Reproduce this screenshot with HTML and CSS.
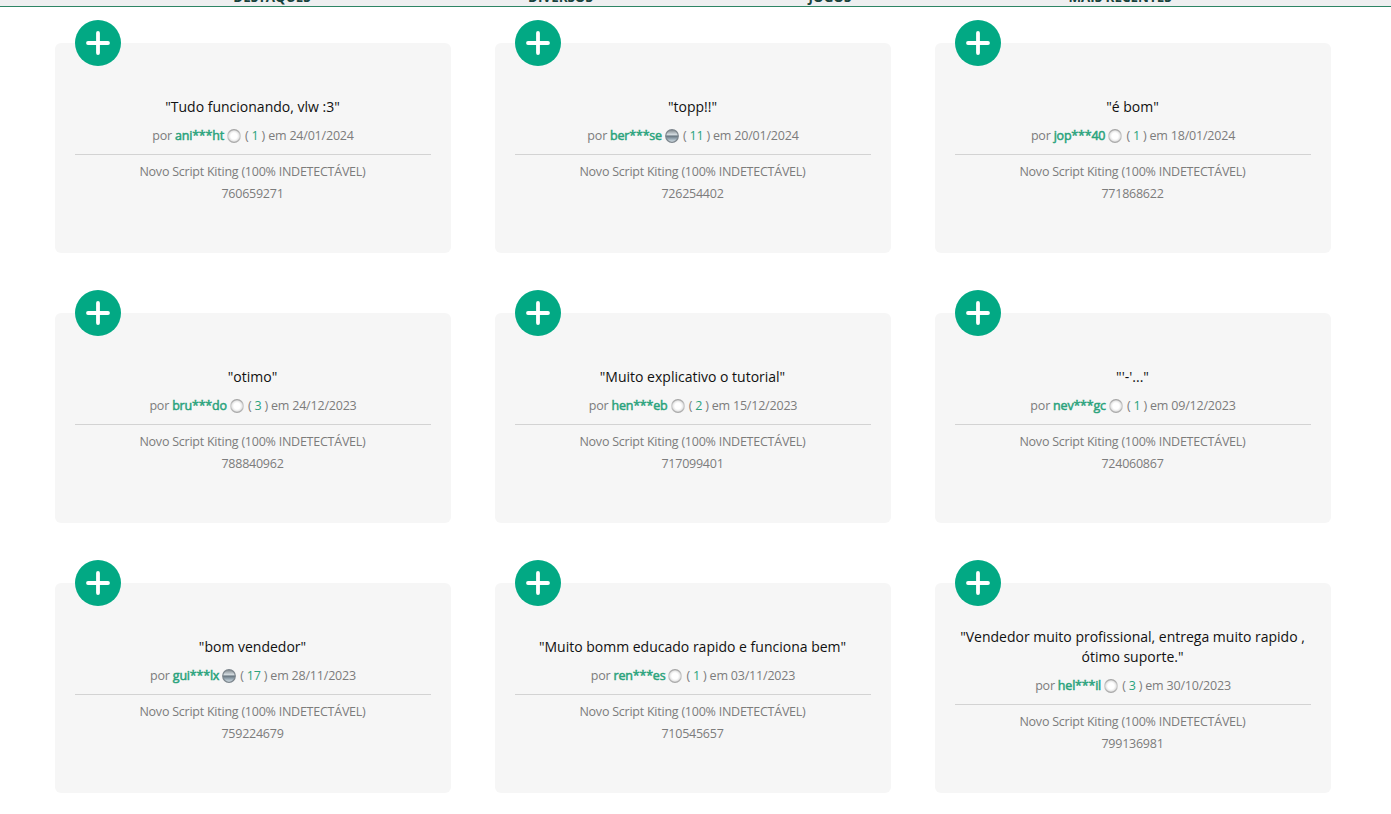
FILE: index.html
```
<!DOCTYPE html>
<html lang="pt-BR">
<head>
    <meta charset="UTF-8">
    <meta name="viewport" content="width=device-width, initial-scale=1.0">
    <title>Avaliações</title>
    <link rel="stylesheet" href="styles.css">
</head>
<body>
    <!-- Shared icons -->
    <svg class="sprite" width="0" height="0">
        <defs>
            <linearGradient id="silver" x1="0" y1="0" x2="0" y2="1">
                <stop offset="0" stop-color="#a4a4a4"/>
                <stop offset="0.5" stop-color="#cfcfcf"/>
                <stop offset="1" stop-color="#a8a8a8"/>
            </linearGradient>
            <radialGradient id="pearl">
                <stop offset="0.5" stop-color="#ffffff"/>
                <stop offset="1" stop-color="#d8d8d8"/>
            </radialGradient>
            <linearGradient id="steel" x1="0" y1="0" x2="0" y2="1">
                <stop offset="0" stop-color="#7d858b"/>
                <stop offset="0.38" stop-color="#d2dade"/>
                <stop offset="0.52" stop-color="#6b7983"/>
                <stop offset="0.7" stop-color="#93a3ae"/>
                <stop offset="1" stop-color="#dce8ee"/>
            </linearGradient>
        </defs>
        <symbol id="plus" viewBox="0 0 46 46">
            <circle cx="23" cy="23" r="23" fill="#02a984"/>
            <path d="M23 13v20M13 23h20" stroke="#fff" stroke-width="3.8" stroke-linecap="round"/>
        </symbol>
        <symbol id="ball-white" viewBox="0 0 14 14">
            <circle cx="7" cy="7" r="6.3" fill="url(#pearl)" stroke="url(#silver)" stroke-width="1.2"/>
        </symbol>
        <symbol id="ball-steel" viewBox="0 0 14 14">
            <circle cx="7" cy="7" r="6.3" fill="url(#steel)" stroke="#7d868d" stroke-width="1.2"/>
        </symbol>
    </svg>

    <nav class="menu">
        <a class="menu-item">DESTAQUES</a>
        <a class="menu-item">DIVERSOS</a>
        <a class="menu-item">JOGOS</a>
        <a class="menu-item">MAIS RECENTES</a>
    </nav>

    <main class="reviews">
        <div class="card">
            <svg class="plus"><use href="#plus"/></svg>
            <p class="quote">"Tudo funcionando, vlw :3"</p>
            <p class="author">por <b>ani***ht</b> <svg class="ball"><use href="#ball-white"/></svg> ( <span class="points">1</span> ) em 24/01/2024</p>
            <p class="product">Novo Script Kiting (100% INDETECTÁVEL)<br>760659271</p>
        </div>
        <div class="card">
            <svg class="plus"><use href="#plus"/></svg>
            <p class="quote">"topp!!"</p>
            <p class="author">por <b>ber***se</b> <svg class="ball"><use href="#ball-steel"/></svg> ( <span class="points">11</span> ) em 20/01/2024</p>
            <p class="product">Novo Script Kiting (100% INDETECTÁVEL)<br>726254402</p>
        </div>
        <div class="card">
            <svg class="plus"><use href="#plus"/></svg>
            <p class="quote">"é bom"</p>
            <p class="author">por <b>jop***40</b> <svg class="ball"><use href="#ball-white"/></svg> ( <span class="points">1</span> ) em 18/01/2024</p>
            <p class="product">Novo Script Kiting (100% INDETECTÁVEL)<br>771868622</p>
        </div>
        <div class="card">
            <svg class="plus"><use href="#plus"/></svg>
            <p class="quote">"otimo"</p>
            <p class="author">por <b>bru***do</b> <svg class="ball"><use href="#ball-white"/></svg> ( <span class="points">3</span> ) em 24/12/2023</p>
            <p class="product">Novo Script Kiting (100% INDETECTÁVEL)<br>788840962</p>
        </div>
        <div class="card">
            <svg class="plus"><use href="#plus"/></svg>
            <p class="quote">"Muito explicativo o tutorial"</p>
            <p class="author">por <b>hen***eb</b> <svg class="ball"><use href="#ball-white"/></svg> ( <span class="points">2</span> ) em 15/12/2023</p>
            <p class="product">Novo Script Kiting (100% INDETECTÁVEL)<br>717099401</p>
        </div>
        <div class="card">
            <svg class="plus"><use href="#plus"/></svg>
            <p class="quote">"'-'..."</p>
            <p class="author">por <b>nev***gc</b> <svg class="ball"><use href="#ball-white"/></svg> ( <span class="points">1</span> ) em 09/12/2023</p>
            <p class="product">Novo Script Kiting (100% INDETECTÁVEL)<br>724060867</p>
        </div>
        <div class="card">
            <svg class="plus"><use href="#plus"/></svg>
            <p class="quote">"bom vendedor"</p>
            <p class="author">por <b>gui***lx</b> <svg class="ball"><use href="#ball-steel"/></svg> ( <span class="points">17</span> ) em 28/11/2023</p>
            <p class="product">Novo Script Kiting (100% INDETECTÁVEL)<br>759224679</p>
        </div>
        <div class="card">
            <svg class="plus"><use href="#plus"/></svg>
            <p class="quote">"Muito bomm educado rapido e funciona bem"</p>
            <p class="author">por <b>ren***es</b> <svg class="ball"><use href="#ball-white"/></svg> ( <span class="points">1</span> ) em 03/11/2023</p>
            <p class="product">Novo Script Kiting (100% INDETECTÁVEL)<br>710545657</p>
        </div>
        <div class="card">
            <svg class="plus"><use href="#plus"/></svg>
            <p class="quote">"Vendedor muito profissional, entrega muito rapido , ótimo suporte."</p>
            <p class="author">por <b>hel***il</b> <svg class="ball"><use href="#ball-white"/></svg> ( <span class="points">3</span> ) em 30/10/2023</p>
            <p class="product">Novo Script Kiting (100% INDETECTÁVEL)<br>799136981</p>
        </div>
    </main>
</body>
</html>
```
FILE: styles.css
```
* {
    box-sizing: border-box;
}

body {
    margin: 0;
    height: 814px;
    overflow: hidden;
    background-color: #fff;
    font-family: "Open Sans", sans-serif;
    color: #7c7c7c;
}

.sprite {
    position: absolute;
}

/* Menu bar, scrolled almost out of view */
.menu {
    display: grid;
    grid-template-columns: 288px 289px 250px 330px;
    padding-left: 128px;
    height: 7px;
    overflow: hidden;
    background-color: #eeeff0;
    border-bottom: 1px solid #2e8565;
}

.menu-item {
    height: 20px;
    margin-top: -13px;
    line-height: 20px;
    text-align: center;
    font-size: 13.4px;
    font-weight: 700;
    color: #18423c;
}

/* Review cards */
.reviews {
    display: grid;
    grid-template-columns: repeat(3, 396px);
    gap: 60px 44px;
    padding: 36px 55px 0;
}

.card {
    position: relative;
    display: flex;
    flex-direction: column;
    justify-content: center;
    height: 210px;
    padding: 6px 20px 0;
    background-color: #f6f6f6;
    border-radius: 6px;
    text-align: center;
}

.plus {
    position: absolute;
    top: -23px;
    left: 20px;
    width: 46px;
    height: 46px;
}

.quote {
    margin: 0 1px 0 0;
    font-size: 14px;
    line-height: 20px;
    color: #111;
}

.author {
    margin: 8px 0 0;
    height: 30px;
    line-height: 22px;
    font-size: 12.5px;
    letter-spacing: -0.2px;
    border-bottom: 1px solid #d3d3d3;
}

.author b {
    font-weight: 400;
    -webkit-text-stroke: 0.5px #2aa37c;
    color: #2aa37c;
}

.points {
    color: #2aa37c;
}

.ball {
    width: 14px;
    height: 14px;
    margin: 0 1px 0 0;
    vertical-align: -3px;
}

.product {
    margin: 6px 1px 0 0;
    font-size: 12.5px;
    line-height: 22px;
    letter-spacing: -0.24px;
}
```
